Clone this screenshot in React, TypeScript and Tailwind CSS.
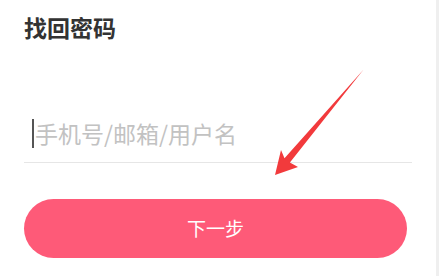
import React from 'react';

const font = { fontFamily: '"Noto Sans CJK SC", "Noto Sans", sans-serif' };

const Arrow: React.FC = () => (
  <svg
    className="pointer-events-none absolute left-0 top-0"
    width="439"
    height="276"
    viewBox="0 0 439 276"
  >
    <polygon
      points="364.5,68.5 363.6,69.4 289.9,162.6 298,167 275,175 281,150 284.5,158.2"
      fill="#f23a3c"
    />
  </svg>
);

export default function App() {
  return (
    <div className="relative flex h-[276px] w-[439px] overflow-hidden bg-white" style={font}>
      <div className="flex w-[436px] flex-col px-[24px]">
        <h1 className="mt-[11px] h-[32px] text-[23px] font-bold leading-[32px] text-[#333333]">
          找回密码
        </h1>

        <div className="mt-[69px] flex h-[51px] items-center border-b border-[#e6e6e6] pb-[8px] pr-[5px]">
          <span className="ml-[8px] h-[29px] w-[2px] bg-[#555555]" />
          <input
            readOnly
            placeholder="手机号/邮箱/用户名"
            className="ml-[1px] w-full bg-transparent text-[23px] leading-[30px] text-[#333333] outline-none placeholder:text-[#c2c2c2]"
            style={font}
          />
        </div>

        <button className="mt-[36px] mr-[5px] flex h-[59px] items-center justify-center rounded-full bg-[#fe5a78] text-[19px] text-white">
          下一步
        </button>
      </div>
      <div className="flex-1 bg-[#efefef]" />
      <Arrow />
    </div>
  );
}
